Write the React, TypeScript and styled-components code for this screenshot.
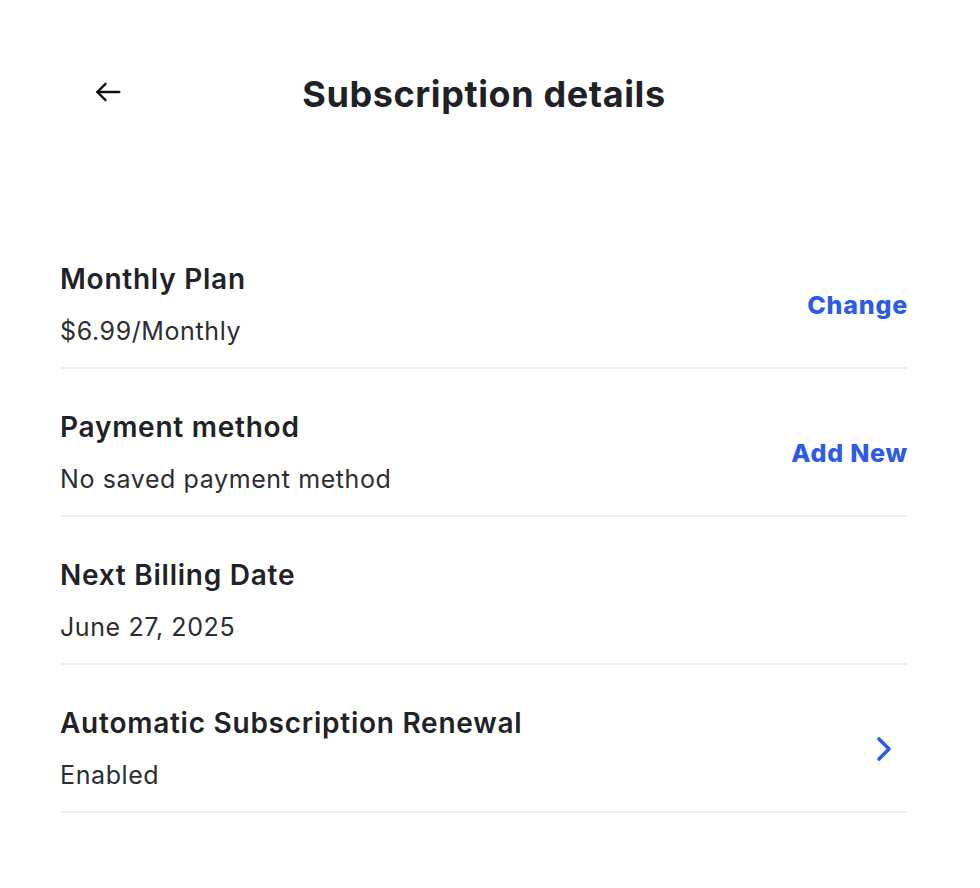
import React from "react";
import styled, { createGlobalStyle } from "styled-components";

const GlobalStyle = createGlobalStyle`
  html, body { margin: 0; padding: 0; background: #ffffff; }
  body { font-family: Inter, "Noto Sans", sans-serif; color: #212529; }
`;

const Page = styled.div`
  width: 980px;
  padding: 60px 72px 0 60px;
  box-sizing: border-box;
`;

const Header = styled.header`
  display: grid;
  grid-template-columns: 1fr auto 1fr;
  align-items: center;
  height: 64px;
`;

const BackButton = styled.button`
  justify-self: start;
  margin-left: 33px;
  width: 30px;
  height: 30px;
  padding: 0;
  border: none;
  background: none;
  display: flex;
  align-items: center;
  justify-content: center;
  cursor: pointer;
  color: #111;
`;

const Title = styled.h1`
  margin: 3px 0 0 0;
  font-size: 36px;
  font-weight: 700;
  letter-spacing: 0.6px;
  color: #1e2227;
`;

const List = styled.ul`
  list-style: none;
  margin: 97px 0 0 0;
  padding: 0;
`;

const Row = styled.li`
  display: flex;
  align-items: center;
  justify-content: space-between;
  padding: 41px 0 19px 0;
  border-bottom: 2px solid #e8f0fb;
`;

const Info = styled.div`
  display: flex;
  flex-direction: column;
  gap: 18px;
`;

const Label = styled.div`
  font-size: 28px;
  line-height: 34px;
  font-weight: 600;
  letter-spacing: 0.75px;
  color: #1f2327;
`;

const Value = styled.div`
  font-size: 25px;
  line-height: 34px;
  font-weight: 400;
  letter-spacing: 0.6px;
  color: #2a2e33;
`;

const Action = styled.button`
  border: none;
  background: none;
  padding: 0;
  font-family: inherit;
  font-size: 25px;
  font-weight: 800;
  letter-spacing: 0.8px;
  color: #2c5be6;
  cursor: pointer;
`;

const Chevron = styled.span`
  display: flex;
  margin-right: 15px;
  color: #2c5be6;
`;

type Item = { label: string; value: string; action?: string; chevron?: boolean };

const items: Item[] = [
  { label: "Monthly Plan", value: "$6.99/Monthly", action: "Change" },
  { label: "Payment method", value: "No saved payment method", action: "Add New" },
  { label: "Next Billing Date", value: "June 27, 2025" },
  { label: "Automatic Subscription Renewal", value: "Enabled", chevron: true },
];

export default function App() {
  return (
    <Page>
      <GlobalStyle />
      <Header>
        <BackButton aria-label="Back">
          <svg width="30" height="30" viewBox="0 0 24 24" fill="none" stroke="currentColor" strokeWidth="1.9" strokeLinecap="round" strokeLinejoin="round">
            <path d="M21 12H3.5" />
            <path d="M10 5.5L3.5 12l6.5 6.5" />
          </svg>
        </BackButton>
        <Title>Subscription details</Title>
        <span />
      </Header>
      <List>
        {items.map((it) => (
          <Row key={it.label}>
            <Info>
              <Label>{it.label}</Label>
              <Value>{it.value}</Value>
            </Info>
            {it.action && <Action>{it.action}</Action>}
            {it.chevron && (
              <Chevron>
                <svg width="18" height="26" viewBox="0 0 18 26" fill="none" stroke="currentColor" strokeWidth="3.6" strokeLinecap="round" strokeLinejoin="round">
                  <path d="M4 3l10 10-10 10" />
                </svg>
              </Chevron>
            )}
          </Row>
        ))}
      </List>
    </Page>
  );
}
